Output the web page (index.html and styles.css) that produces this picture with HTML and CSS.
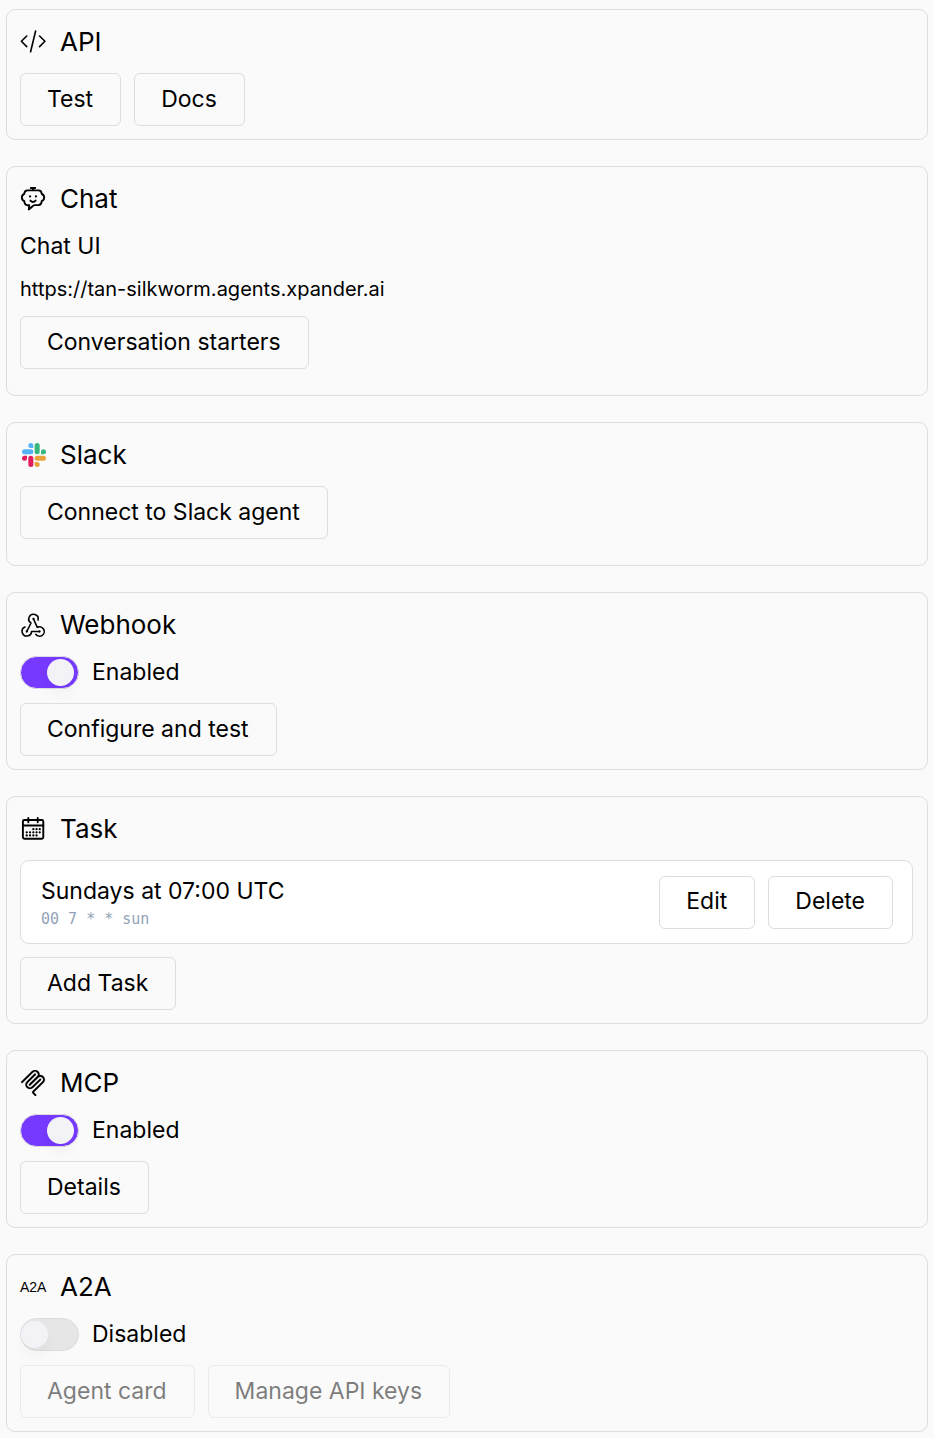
FILE: index.html
```html
<!DOCTYPE html>
<html lang="en">
<head>
<meta charset="utf-8">
<meta name="viewport" content="width=device-width, initial-scale=1">
<title>Agent channels</title>
<link rel="stylesheet" href="styles.css">
</head>
<body>
<main class="channels">
  <section class="card">
    <h2 class="card-title">
      <svg class="icon" viewBox="0 0 26 26" aria-hidden="true"><path d="M6.7 7 1.4 12.300l5.300 5.300M19.600 7l5.300 5.300-5.300 5.300M15.600 2 10.600 22.800"/></svg>
      API
    </h2>
    <div class="actions">
      <button class="btn" type="button">Test</button>
      <button class="btn" type="button">Docs</button>
    </div>
  </section>

  <section class="card card-roomy">
    <h2 class="card-title">
      <svg class="icon icon-bold" viewBox="0 0 26 26" aria-hidden="true"><path d="M10.800 2h4.400M13 2v2.400M7.500 4.400h11q3 0 3.200 3.400q2.500 1.200 2.500 3.700t-2.500 3.700q-.2 3.700-3.200 3.900h-3.700q-1.500.2-2.500 1.500l-3.500 2.900.4-4.300h-1.700q-3-.2-3.200-4q-2.500-1.200-2.500-3.700t2.500-3.700q.2-3.400 3.200-3.400zM10.400 14.600q2.600 2.800 5.200 0"/><path class="dots" d="M10.100 10.300v.2M15.900 10.300v.2"/></svg>
      Chat
    </h2>
    <h3 class="subtitle">Chat UI</h3>
    <a class="url" href="https://tan-silkworm.agents.xpander.ai">https://tan-silkworm.agents.xpander.ai</a>
    <div class="actions">
      <button class="btn" type="button">Conversation starters</button>
    </div>
  </section>

  <section class="card card-roomy">
    <h2 class="card-title">
      <svg class="icon icon-brand" viewBox="-2 -1 26 26" aria-hidden="true">
        <path fill="#e01e5a" d="M5.042 15.165a2.528 2.528 0 0 1-2.520 2.523A2.528 2.528 0 0 1 0 15.165a2.527 2.527 0 0 1 2.522-2.520h2.520v2.520zM6.313 15.165a2.527 2.527 0 0 1 2.521-2.520 2.527 2.527 0 0 1 2.521 2.520v6.313A2.528 2.528 0 0 1 8.834 24a2.528 2.528 0 0 1-2.521-2.522v-6.313z"/>
        <path fill="#53b1f5" d="M8.834 5.042a2.528 2.528 0 0 1-2.521-2.520A2.528 2.528 0 0 1 8.834 0a2.528 2.528 0 0 1 2.521 2.522v2.520H8.834zM8.834 6.313a2.528 2.528 0 0 1 2.521 2.521 2.528 2.528 0 0 1-2.521 2.521H2.522A2.528 2.528 0 0 1 0 8.834a2.528 2.528 0 0 1 2.522-2.521h6.312z"/>
        <path fill="#35b77e" d="M18.956 8.834a2.528 2.528 0 0 1 2.522-2.521A2.528 2.528 0 0 1 24 8.834a2.528 2.528 0 0 1-2.522 2.521h-2.522V8.834zM17.688 8.834a2.528 2.528 0 0 1-2.523 2.521 2.527 2.527 0 0 1-2.520-2.521V2.522A2.527 2.527 0 0 1 15.165 0a2.528 2.528 0 0 1 2.523 2.522v6.312z"/>
        <path fill="#e9a23b" d="M15.165 18.956a2.528 2.528 0 0 1 2.523 2.522A2.528 2.528 0 0 1 15.165 24a2.527 2.527 0 0 1-2.520-2.522v-2.522h2.520zM15.165 17.688a2.527 2.527 0 0 1-2.520-2.523 2.526 2.526 0 0 1 2.520-2.520h6.313A2.527 2.527 0 0 1 24 15.165a2.528 2.528 0 0 1-2.522 2.523h-6.313z"/>
      </svg>
      Slack
    </h2>
    <div class="actions">
      <button class="btn" type="button">Connect to Slack agent</button>
    </div>
  </section>

  <section class="card">
    <h2 class="card-title">
      <svg class="icon" viewBox="0 0 26 26" aria-hidden="true"><path d="M5 15A4.700 4.700 0 1 0 11.500 19.500H19.500M13.500 7 17.300 15.300A4.700 4.700 0 1 1 15.800 22.300M6.800 19.500 11 11A4.700 4.700 0 1 1 18.100 8"/><path class="dots" d="M13.500 6.800v.2M6.800 19.400v.2M19.500 19.400v.2"/></svg>
      Webhook
    </h2>
    <label class="toggle-row"><input class="toggle" type="checkbox" role="switch" checked>Enabled</label>
    <div class="actions">
      <button class="btn" type="button">Configure and test</button>
    </div>
  </section>

  <section class="card">
    <h2 class="card-title">
      <svg class="icon icon-bold" viewBox="0 0 26 26" aria-hidden="true"><rect x="2.900" y="4" width="20.400" height="18.700" rx="1.500"/><path d="M2.900 9.500h20.400M8.300 2v4.200M17.700 2v4.200"/><path class="dots" d="M13.300 13.200h.1M16.500 13.200h.1M19.700 13.200h.1M6.700 16.300h.1M10 16.300h.1M13.300 16.300h.1M16.500 16.300h.1M19.700 16.300h.1M6.700 19.400h.1M10 19.400h.1M13.300 19.400h.1M16.500 19.400h.1"/></svg>
      Task
    </h2>
    <div class="task">
      <div class="task-info">
        <span>Sundays at 07:00 UTC</span>
        <code class="cron">00 7 * * sun</code>
      </div>
      <div class="actions">
        <button class="btn" type="button">Edit</button>
        <button class="btn" type="button">Delete</button>
      </div>
    </div>
    <div class="actions">
      <button class="btn" type="button">Add Task</button>
    </div>
  </section>

  <section class="card">
    <h2 class="card-title">
      <svg class="icon icon-mcp" viewBox="0 0 24 24" aria-hidden="true"><path d="M15.688 2.343a2.588 2.588 0 00-3.610 0l-9.626 9.440a.863.863 0 01-1.203 0 .823.823 0 010-1.180l9.626-9.440a4.313 4.313 0 016.016 0 4.116 4.116 0 011.204 3.540 4.300 4.300 0 013.609 1.180l.05.05a4.115 4.115 0 010 5.900l-8.706 8.537a.274.274 0 000 .393l1.788 1.754a.823.823 0 010 1.180.863.863 0 01-1.203 0l-1.788-1.753a1.920 1.920 0 010-2.754l8.706-8.538a2.470 2.470 0 000-3.540l-.05-.049a2.588 2.588 0 00-3.607-.003l-7.172 7.034-.002.002-.098.097a.863.863 0 01-1.204 0 .823.823 0 010-1.180l7.273-7.133a2.470 2.470 0 00-.003-3.537z"/><path d="M14.485 4.703a.823.823 0 000-1.180.863.863 0 00-1.204 0l-7.119 6.982a4.115 4.115 0 000 5.900 4.314 4.314 0 006.016 0l7.120-6.982a.823.823 0 000-1.180.863.863 0 00-1.204 0l-7.119 6.982a2.588 2.588 0 01-3.610 0 2.470 2.470 0 010-3.540l7.120-6.982z"/></svg>
      MCP
    </h2>
    <label class="toggle-row"><input class="toggle" type="checkbox" role="switch" checked>Enabled</label>
    <div class="actions">
      <button class="btn" type="button">Details</button>
    </div>
  </section>

  <section class="card">
    <h2 class="card-title">
      <span class="icon icon-text" aria-hidden="true">A2A</span>
      A2A
    </h2>
    <label class="toggle-row"><input class="toggle" type="checkbox" role="switch">Disabled</label>
    <div class="actions">
      <button class="btn" type="button" disabled>Agent card</button>
      <button class="btn" type="button" disabled>Manage API keys</button>
    </div>
  </section>
</main>
</body>
</html>
```
FILE: styles.css
```css
* {
  box-sizing: border-box;
}

body {
  margin: 0;
  background: #fafafa;
  color: #000000;
  font-family: Inter, "Liberation Sans", sans-serif;
  font-size: 23px;
  line-height: 32px;
}

.channels {
  display: flex;
  flex-direction: column;
  gap: 26px;
  padding: 9px 6px 6px;
}

.card {
  display: flex;
  flex-direction: column;
  gap: 13px;
  padding: 13px 14px 13px 13px;
  border: 1px solid #dddddf;
  border-radius: 9px;
}

.card-roomy {
  padding-bottom: 26px;
}

.card-title {
  display: flex;
  align-items: center;
  gap: 14px;
  margin: 0;
  font-size: 26px;
  font-weight: 400;
  line-height: 37px;
}

.icon {
  flex: none;
  width: 26px;
  height: 26px;
  fill: none;
  stroke: currentColor;
  stroke-width: 1.6;
  stroke-linecap: round;
  stroke-linejoin: round;
}

.icon-bold {
  stroke-width: 1.9;
}

.icon-brand {
  fill: currentColor;
  stroke: none;
}

.icon-mcp {
  fill: currentColor;
  stroke-width: 0.2;
}

.icon-text {
  font-family: "Liberation Sans", sans-serif;
  font-size: 14px;
  line-height: 26px;
}

.dots {
  stroke-width: 2.2;
}

.subtitle {
  margin: 0;
  font-size: 23px;
  font-weight: 400;
}

.url {
  align-self: flex-start;
  color: inherit;
  font-size: 20px;
  line-height: 28px;
  text-decoration: none;
}

.actions {
  display: flex;
  flex-wrap: wrap;
  gap: 13px;
}

.btn {
  height: 53px;
  padding: 0 27px 2px 26px;
  border: 1px solid #dddddf;
  border-radius: 6px;
  background: transparent;
  color: inherit;
  font: inherit;
}

.btn:disabled {
  opacity: 0.5;
}

.toggle-row {
  display: flex;
  align-items: flex-start;
  align-self: flex-start;
  gap: 13px;
  height: 34px;
}

.toggle {
  display: flex;
  align-items: center;
  appearance: none;
  width: 59px;
  height: 33px;
  margin: 0;
  padding: 0;
  border: 1px solid #dddddf;
  border-radius: 17px;
  background: #e6e6e7;
}

.toggle::before {
  content: "";
  width: 27px;
  height: 27px;
  border-radius: 50%;
  background: #f3f3f7;
  box-shadow: 0 10px 14px rgba(0, 0, 0, 0.03);
}

.toggle:checked {
  justify-content: flex-end;
  padding-right: 4px;
  background: #7539ff;
}

.task {
  display: flex;
  align-items: center;
  justify-content: space-between;
  gap: 13px;
  padding: 14px 19px 14px 20px;
  border: 1px solid #dddddf;
  border-radius: 9px;
  background: #ffffff;
}

.task-info {
  display: flex;
  flex-direction: column;
  gap: 2px;
}

.cron {
  color: #94a3b8;
  font-family: "DejaVu Sans Mono", monospace;
  font-size: 15px;
  line-height: 20px;
}
```
